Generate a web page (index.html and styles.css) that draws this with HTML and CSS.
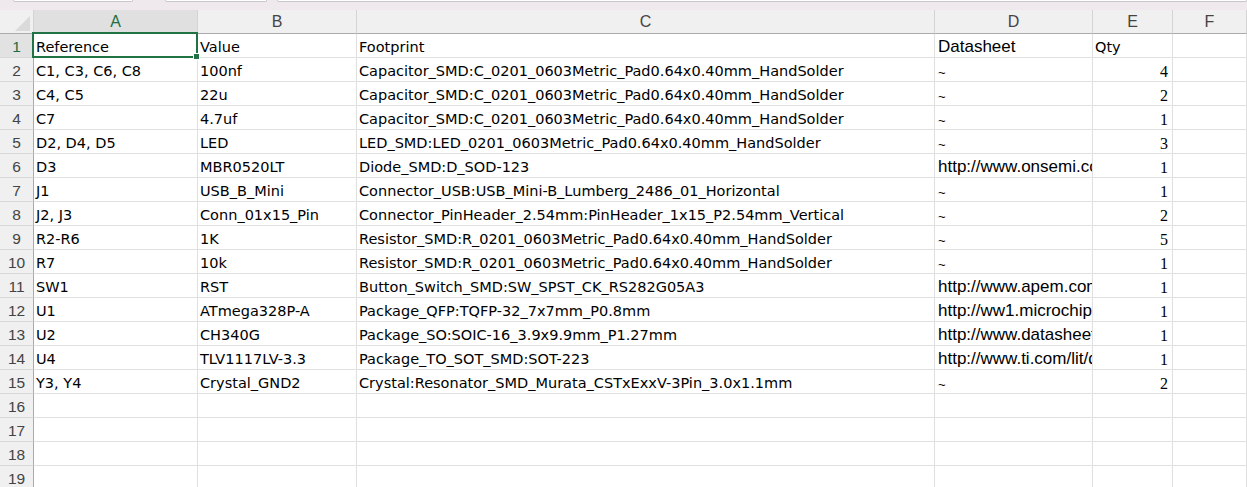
FILE: index.html
```html
<!DOCTYPE html>
<html lang="en">
<head>
<meta charset="utf-8">
<title>BOM</title>
<link rel="stylesheet" href="styles.css">
</head>
<body>
<div class="topstrip">
  <div class="tab tab-1"></div>
  <div class="tab tab-2"></div>
  <div class="tab tab-3"></div>
</div>
<div class="sheet">
  <div class="corner"><span class="tri"></span></div>
  <div class="colhdr active">A</div>
  <div class="colhdr">B</div>
  <div class="colhdr">C</div>
  <div class="colhdr">D</div>
  <div class="colhdr">E</div>
  <div class="colhdr">F</div>

  <div class="rowhdr active">1</div>
  <div class="cell">Reference</div><div class="cell">Value</div><div class="cell">Footprint</div><div class="cell ds">Datasheet</div><div class="cell">Qty</div><div class="cell"></div>

  <div class="rowhdr">2</div>
  <div class="cell">C1, C3, C6, C8</div><div class="cell">100nf</div><div class="cell">Capacitor_SMD:C_0201_0603Metric_Pad0.64x0.40mm_HandSolder</div><div class="cell ds"><span class="tilde">~</span></div><div class="cell num">4</div><div class="cell"></div>

  <div class="rowhdr">3</div>
  <div class="cell">C4, C5</div><div class="cell">22u</div><div class="cell">Capacitor_SMD:C_0201_0603Metric_Pad0.64x0.40mm_HandSolder</div><div class="cell ds"><span class="tilde">~</span></div><div class="cell num">2</div><div class="cell"></div>

  <div class="rowhdr">4</div>
  <div class="cell">C7</div><div class="cell">4.7uf</div><div class="cell">Capacitor_SMD:C_0201_0603Metric_Pad0.64x0.40mm_HandSolder</div><div class="cell ds"><span class="tilde">~</span></div><div class="cell num">1</div><div class="cell"></div>

  <div class="rowhdr">5</div>
  <div class="cell">D2, D4, D5</div><div class="cell">LED</div><div class="cell">LED_SMD:LED_0201_0603Metric_Pad0.64x0.40mm_HandSolder</div><div class="cell ds"><span class="tilde">~</span></div><div class="cell num">3</div><div class="cell"></div>

  <div class="rowhdr">6</div>
  <div class="cell">D3</div><div class="cell">MBR0520LT</div><div class="cell">Diode_SMD:D_SOD-123</div><div class="cell ds">http://www.onsemi.com/pub_link/Collateral/MBR0520LT1-D.PDF</div><div class="cell num">1</div><div class="cell"></div>

  <div class="rowhdr">7</div>
  <div class="cell">J1</div><div class="cell">USB_B_Mini</div><div class="cell">Connector_USB:USB_Mini-B_Lumberg_2486_01_Horizontal</div><div class="cell ds"><span class="tilde">~</span></div><div class="cell num">1</div><div class="cell"></div>

  <div class="rowhdr">8</div>
  <div class="cell">J2, J3</div><div class="cell">Conn_01x15_Pin</div><div class="cell">Connector_PinHeader_2.54mm:PinHeader_1x15_P2.54mm_Vertical</div><div class="cell ds"><span class="tilde">~</span></div><div class="cell num">2</div><div class="cell"></div>

  <div class="rowhdr">9</div>
  <div class="cell">R2-R6</div><div class="cell">1K</div><div class="cell">Resistor_SMD:R_0201_0603Metric_Pad0.64x0.40mm_HandSolder</div><div class="cell ds"><span class="tilde">~</span></div><div class="cell num">5</div><div class="cell"></div>

  <div class="rowhdr">10</div>
  <div class="cell">R7</div><div class="cell">10k</div><div class="cell">Resistor_SMD:R_0201_0603Metric_Pad0.64x0.40mm_HandSolder</div><div class="cell ds"><span class="tilde">~</span></div><div class="cell num">1</div><div class="cell"></div>

  <div class="rowhdr">11</div>
  <div class="cell">SW1</div><div class="cell">RST</div><div class="cell">Button_Switch_SMD:SW_SPST_CK_RS282G05A3</div><div class="cell ds">http://www.apem.com/int/index.php?controller=attachment&amp;id_attachment=1371</div><div class="cell num">1</div><div class="cell"></div>

  <div class="rowhdr">12</div>
  <div class="cell">U1</div><div class="cell">ATmega328P-A</div><div class="cell">Package_QFP:TQFP-32_7x7mm_P0.8mm</div><div class="cell ds">http://ww1.microchip.com/downloads/en/DeviceDoc/ATmega328P.pdf</div><div class="cell num">1</div><div class="cell"></div>

  <div class="rowhdr">13</div>
  <div class="cell">U2</div><div class="cell">CH340G</div><div class="cell">Package_SO:SOIC-16_3.9x9.9mm_P1.27mm</div><div class="cell ds">http://www.datasheet5.com/pdf-local-2195953</div><div class="cell num">1</div><div class="cell"></div>

  <div class="rowhdr">14</div>
  <div class="cell">U4</div><div class="cell">TLV1117LV-3.3</div><div class="cell">Package_TO_SOT_SMD:SOT-223</div><div class="cell ds">http://www.ti.com/lit/ds/symlink/tlv1117lv.pdf</div><div class="cell num">1</div><div class="cell"></div>

  <div class="rowhdr">15</div>
  <div class="cell">Y3, Y4</div><div class="cell">Crystal_GND2</div><div class="cell">Crystal:Resonator_SMD_Murata_CSTxExxV-3Pin_3.0x1.1mm</div><div class="cell ds"><span class="tilde">~</span></div><div class="cell num">2</div><div class="cell"></div>

  <div class="rowhdr">16</div>
  <div class="cell"></div><div class="cell"></div><div class="cell"></div><div class="cell"></div><div class="cell"></div><div class="cell"></div>
  <div class="rowhdr">17</div>
  <div class="cell"></div><div class="cell"></div><div class="cell"></div><div class="cell"></div><div class="cell"></div><div class="cell"></div>
  <div class="rowhdr">18</div>
  <div class="cell"></div><div class="cell"></div><div class="cell"></div><div class="cell"></div><div class="cell"></div><div class="cell"></div>
  <div class="rowhdr">19</div>
  <div class="cell"></div><div class="cell"></div><div class="cell"></div><div class="cell"></div><div class="cell"></div><div class="cell"></div>

  <div class="selection"><span class="handle"></span></div>
</div>
</body>
</html>
```

FILE: styles.css
```css
html, body {
  margin: 0;
  padding: 0;
  background: #ffffff;
  overflow: hidden;
}

.topstrip {
  height: 10px;
  background: #efe9ee;
  display: flex;
  align-items: flex-start;
}
.tab {
  height: 1px;
  background: #ffffff;
  border: 1px solid #c9c6c9;
  border-top: none;
  border-radius: 0 0 3px 3px;
}
.tab-1 { margin-left: 13px; width: 118px; }
.tab-2 { margin-left: 32px; width: 100px; }
.tab-3 { margin-left: 10px; flex: 1; }

.sheet {
  position: relative;
  display: grid;
  grid-template-columns: 34px 164px 159px 578px 158px 80px 1fr;
  grid-auto-rows: 24px;
  font-family: "DejaVu Sans", "Liberation Sans", sans-serif;
  font-size: 14.5px;
  color: #000;
}

.corner, .colhdr, .rowhdr, .cell {
  box-sizing: border-box;
  border-right: 1px solid #e0e0e0;
  border-bottom: 1px solid #e0e0e0;
  white-space: nowrap;
  overflow: hidden;
}

.corner {
  position: relative;
  background: #f0f0f0;
  border-right: 1px solid #d4d4d4;
  border-bottom: 1px solid #ababab;
}
.corner .tri {
  position: absolute;
  right: 3px;
  bottom: 2px;
  width: 0;
  height: 0;
  border-left: 15px solid transparent;
  border-bottom: 15px solid #dadada;
}

.colhdr {
  background: #f0f0f0;
  border-right: 1px solid #d4d4d4;
  border-bottom: 1px solid #ababab;
  text-align: center;
  font-family: "Liberation Sans", sans-serif;
  font-size: 16px;
  line-height: 23px;
  color: #444;
}
.colhdr.active {
  background: #e0e0e0;
  color: #1e6e42;
}

.rowhdr {
  background: #f0f0f0;
  border-right: 1px solid #ababab;
  border-bottom: 1px solid #d8d8d8;
  text-align: center;
  font-family: "Liberation Sans", sans-serif;
  font-size: 15.5px;
  line-height: 23px;
  padding-top: 1px;
  color: #444;
}
.rowhdr.active {
  background: #e2e2e2;
  color: #1e6e42;
}

.cell {
  padding: 2px 3px 0 2px;
  line-height: 23px;
}
.cell.ds {
  font-family: "Liberation Sans", sans-serif;
  font-size: 17px;
  padding-top: 1px;
  padding-left: 3px;
}
.cell.ds .tilde {
  font-size: 13px;
  position: relative;
  top: 1px;
}
.cell.num {
  text-align: right;
  font-family: "Liberation Serif", serif;
  font-size: 16px;
  padding-right: 4px;
}

.selection {
  position: absolute;
  left: 32px;
  top: 22px;
  width: 166px;
  height: 26px;
  box-sizing: border-box;
  border: 2px solid #217346;
  pointer-events: none;
}
.selection .handle {
  position: absolute;
  right: -4px;
  bottom: -4px;
  width: 5px;
  height: 5px;
  background: #217346;
  border: 1px solid #ffffff;
}
```
